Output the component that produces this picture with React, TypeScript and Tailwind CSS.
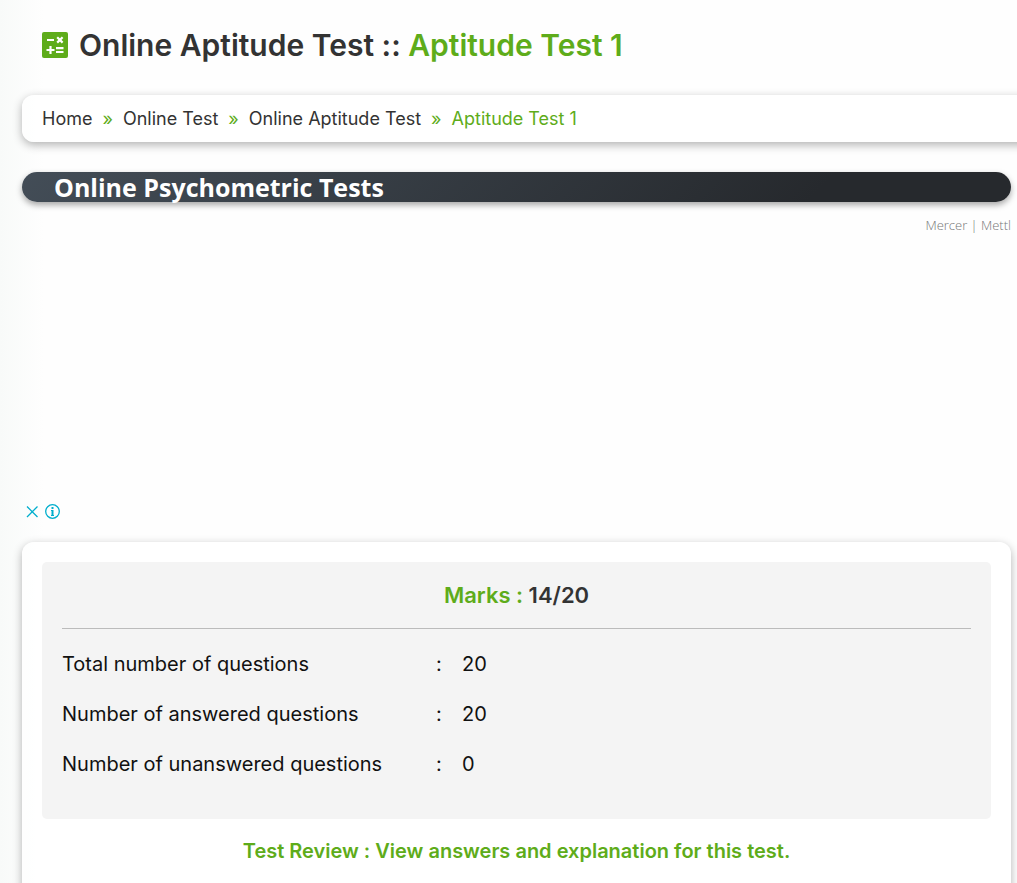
const trail = ['Home', 'Online Test', 'Online Aptitude Test'];

const results = [
  { label: 'Total number of questions', value: '20' },
  { label: 'Number of answered questions', value: '20' },
  { label: 'Number of unanswered questions', value: '0' },
];

function CalculatorIcon() {
  return (
    <svg viewBox="0 0 26 26" className="size-[26px] shrink-0" aria-hidden="true">
      <rect width="26" height="26" rx="2" fill="#5eac1a" />
      <g stroke="#fff" strokeWidth="2.2" fill="none">
        <path d="M5 8h7M4.5 18h8M8.5 14v8M14 16.2h7.5M14 20h7.5M15.2 5.2l5.4 5.4M20.6 5.2l-5.4 5.4" />
      </g>
    </svg>
  );
}

function PageTitle() {
  return (
    <h1 className="flex items-center gap-[11px] px-5 text-[30px] leading-[50px] font-semibold text-[#333]">
      <CalculatorIcon />
      <span>
        Online Aptitude Test :: <span className="text-[#5eac1a]">Aptitude Test 1</span>
      </span>
    </h1>
  );
}

function Breadcrumb() {
  return (
    <nav
      aria-label="Breadcrumb"
      className="mt-[25px] -mr-7 rounded-xl bg-white/80 px-5 shadow-[0_3px_10px_rgba(0,0,0,0.3)]"
    >
      <ol className="flex h-[47px] items-center gap-[10px] text-lg text-[#333]">
        {trail.map((name) => (
          <li key={name} className="flex gap-[10px]">
            <a href="#">{name}</a>
            <span className="text-[#5eac1a]" aria-hidden="true">»</span>
          </li>
        ))}
        <li className="text-[#5eac1a]" aria-current="page">Aptitude Test 1</li>
      </ol>
    </nav>
  );
}

function Advert() {
  return (
    <aside className="mt-[30px] flex h-[350px] flex-col">
      <a
        href="#"
        className="block h-[30px] rounded-full bg-[linear-gradient(135deg,#434d57,#26292d_80%)] pl-8 font-['Open_Sans',sans-serif] text-[25px] leading-[30px] font-bold text-white shadow-[0_3px_6px_rgba(0,0,0,0.35)]"
      >
        Online Psychometric Tests
      </a>
      <a
        href="#"
        className="mt-[14px] self-end font-['Open_Sans',sans-serif] text-[13px] leading-[18px] font-light text-[#777]"
      >
        Mercer | Mettl
      </a>
      <div className="mt-auto flex gap-[5px] pb-[3px] pl-[3px] text-[#00aecd]">
        <button type="button" aria-label="Close ad">
          <svg viewBox="0 0 15 15" className="size-[15px]" stroke="currentColor" strokeWidth="1.3">
            <path d="M2 2.5l10.5 10.5M12.5 2.5L2 13" />
          </svg>
        </button>
        <button type="button" aria-label="Ad information">
          <svg viewBox="0 0 15 15" className="size-[15px]" fill="none" stroke="currentColor">
            <circle cx="7.5" cy="7.5" r="6.8" strokeWidth="1.3" />
            <path d="M7.5 3v2M7.5 6v5.5" strokeWidth="2" />
            <path d="M6 6.5h2M6 11.5h3" />
          </svg>
        </button>
      </div>
    </aside>
  );
}

function ResultCard() {
  return (
    <section className="mt-5 rounded-xl bg-white/80 p-5 shadow-[0_3px_10px_rgba(0,0,0,0.3)]">
      <div className="rounded-[5px] bg-[#f4f4f4] px-5 pb-[30px]">
        <h2 className="border-b border-[#bbb] text-center text-[22px] leading-[66px] font-semibold text-[#333]">
          <span className="text-[#5eac1a]">Marks :</span> 14/20
        </h2>
        <table className="mt-[10px] text-left text-xl text-[#111]">
          <tbody>
            {results.map(({ label, value }) => (
              <tr key={label} className="h-[50px]">
                <th scope="row" className="w-[374px] font-normal">{label}</th>
                <td className="w-[26px]">:</td>
                <td>{value}</td>
              </tr>
            ))}
          </tbody>
        </table>
      </div>
      <p className="mt-4 pb-10 text-center text-xl leading-8 font-semibold text-[#5eac1a]">
        <a href="#">Test Review : View answers and explanation for this test.</a>
      </p>
    </section>
  );
}

export default function App() {
  return (
    <div className="h-screen overflow-hidden bg-[linear-gradient(to_right,#f8faf9,#fefefe_44px)] font-['Inter',sans-serif] [font-feature-settings:'calt'_0]">
      <main className="pt-5 pr-[6px] pl-[22px]">
        <PageTitle />
        <Breadcrumb />
        <Advert />
        <ResultCard />
      </main>
    </div>
  );
}
